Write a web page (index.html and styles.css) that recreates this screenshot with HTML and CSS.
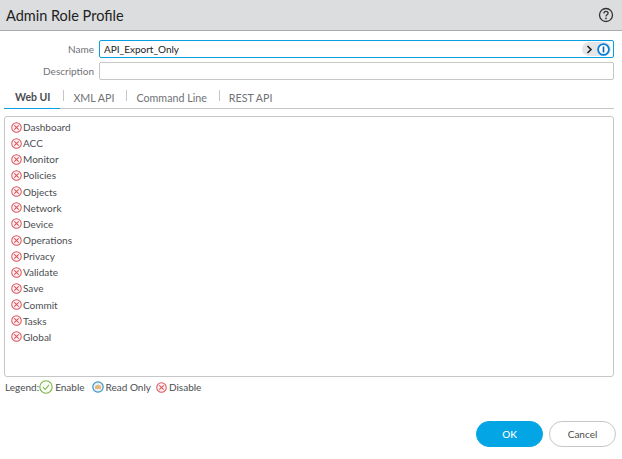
FILE: index.html
```html
<!DOCTYPE html>
<html lang="en">
<head>
  <meta charset="UTF-8" />
  <title>Admin Role Profile</title>
  <link rel="stylesheet" href="styles.css">
</head>
<body>
  <svg class="defs" width="0" height="0">
    <symbol id="disable" viewBox="0 0 12 12">
      <circle cx="6" cy="6" r="5.2" fill="#fdf1f1" stroke="#d9555f" stroke-width="1.1"/>
      <path d="M3.6 3.6l4.8 4.8M8.4 3.6l-4.8 4.8" fill="none" stroke="#d9555f" stroke-width="1.1"/>
    </symbol>
  </svg>

  <div class="dialog">
    <header class="title-bar">
      <h1>Admin Role Profile</h1>
      <svg class="help" width="16" height="16" viewBox="0 0 16 16">
        <circle cx="8" cy="8" r="6.5" fill="none" stroke="#333" stroke-width="1.3"/>
        <path d="M5.9 6.4c0-1.3 1-2 2.1-2s2.1.7 2.1 1.9c0 1.5-2.1 1.6-2.1 3.1" fill="none" stroke="#333" stroke-width="1.3"/>
        <circle cx="8" cy="11.3" r=".9" fill="#333"/>
      </svg>
    </header>

    <div class="fields">
      <div class="field">
        <label>Name</label>
        <div class="input active">
          <span>API_Export_Only</span>
          <div class="pill">
            <svg width="7" height="9" viewBox="0 0 7 9"><path d="M1.5 1l3.5 3.5L1.5 8" fill="none" stroke="#222" stroke-width="1.6"/></svg>
            <svg width="13" height="13" viewBox="0 0 13 13">
              <circle cx="6.5" cy="6.5" r="5.4" fill="#fff" stroke="#0a7fd9" stroke-width="1.8"/>
              <path d="M6.5 3.5v6" stroke="#0a5fa8" stroke-width="1.6"/>
            </svg>
          </div>
        </div>
      </div>
      <div class="field">
        <label>Description</label>
        <div class="input"></div>
      </div>
    </div>

    <nav class="tabs">
      <a class="tab current">Web UI</a>
      <a class="tab">XML API</a>
      <a class="tab">Command Line</a>
      <a class="tab">REST API</a>
    </nav>

    <ul class="perms">
      <li><svg><use href="#disable"/></svg>Dashboard</li>
      <li><svg><use href="#disable"/></svg>ACC</li>
      <li><svg><use href="#disable"/></svg>Monitor</li>
      <li><svg><use href="#disable"/></svg>Policies</li>
      <li><svg><use href="#disable"/></svg>Objects</li>
      <li><svg><use href="#disable"/></svg>Network</li>
      <li><svg><use href="#disable"/></svg>Device</li>
      <li><svg><use href="#disable"/></svg>Operations</li>
      <li><svg><use href="#disable"/></svg>Privacy</li>
      <li><svg><use href="#disable"/></svg>Validate</li>
      <li><svg><use href="#disable"/></svg>Save</li>
      <li><svg><use href="#disable"/></svg>Commit</li>
      <li><svg><use href="#disable"/></svg>Tasks</li>
      <li><svg><use href="#disable"/></svg>Global</li>
    </ul>

    <div class="legend">
      <span class="legend-label">Legend:</span>
      <span class="legend-item enable">
        <svg width="14" height="14" viewBox="0 0 14 14">
          <circle cx="7" cy="7" r="6.2" fill="#fbfdf8" stroke="#7cb445" stroke-width="1.1"/>
          <path d="M4 7.2l2.2 2.3L10 4.8" fill="none" stroke="#7cb445" stroke-width="1.1"/>
        </svg>Enable
      </span>
      <span class="legend-item readonly">
        <svg width="12" height="12" viewBox="0 0 12 12">
          <circle cx="6" cy="6" r="5.2" fill="#e8f2f8" stroke="#3c93c4" stroke-width="1.2"/>
          <path d="M3 8V6.4C3 4.8 4.4 3.8 6 3.8s3 1 3 2.6V8z" fill="#e8b676"/>
        </svg>Read Only
      </span>
      <span class="legend-item">
        <svg width="11" height="11"><use href="#disable"/></svg>Disable
      </span>
    </div>

    <footer class="actions">
      <button class="btn primary">OK</button>
      <button class="btn">Cancel</button>
    </footer>
  </div>
</body>
</html>
```

FILE: styles.css
```css
html, body {
  margin: 0;
  height: 100%;
}
body {
  background: #fff;
  font-family: 'Lato', sans-serif;
  font-size: 10px;
  color: #333;
  overflow: hidden;
}
.defs {
  position: absolute;
}
.dialog {
  display: flex;
  flex-direction: column;
  height: 459px;
}
.title-bar {
  height: 30px;
  background: #dcdddf;
  border-bottom: 1px solid #a9abae;
  display: flex;
  align-items: center;
  justify-content: space-between;
  padding: 0 8px 0 6px;
  flex-shrink: 0;
}
.title-bar h1 {
  margin: 0;
  font-size: 14.5px;
  font-weight: 400;
  color: #222;
}
.help {
  display: block;
}
.fields {
  padding: 9px 8px 0 0;
  display: flex;
  flex-direction: column;
  gap: 4px;
}
.field {
  display: flex;
  align-items: center;
  gap: 5px;
}
.field label {
  width: 94px;
  text-align: right;
  color: #6f7276;
}
.input {
  flex: 1;
  height: 16px;
  border: 1px solid #c4c6c8;
  border-radius: 2px;
  display: flex;
  align-items: center;
  justify-content: space-between;
  padding: 0 2px 0 4px;
  color: #222;
}
.input.active {
  border-color: #0a9fe0;
}
.pill {
  display: flex;
  align-items: center;
  gap: 4px;
  height: 14px;
  padding: 0 1px 0 4px;
  background: #e4e5e6;
  border-radius: 7px;
}
.pill svg {
  display: block;
}
.tabs {
  display: flex;
  align-items: center;
  margin: 8px 8px 0 4px;
  height: 20px;
  border-bottom: 1px solid #c4c6c8;
  font-size: 10.7px;
}
.tab {
  position: relative;
  height: 20px;
  line-height: 19px;
  padding: 0 12px 0 10px;
  color: #6f7276;
  box-sizing: border-box;
}
.tab + .tab::before {
  content: "";
  position: absolute;
  left: 0;
  top: 2px;
  height: 11px;
  border-left: 1px solid #c4c6c8;
}
.tab.current {
  font-weight: 700;
  font-size: 10.5px;
  color: #4a4d50;
  padding: 0 10px 0 11px;
  margin-right: 3px;
  border-bottom: 1px solid #0a9fe0;
  height: 21px;
  margin-bottom: -1px;
}
.perms {
  list-style: none;
  margin: 7px 8px 0 4px;
  padding: 2px 0 1px 6px;
  height: 256px;
  border: 1px solid #c4c6c8;
  border-radius: 3px;
}
.perms li {
  display: flex;
  align-items: center;
  gap: 1px;
  height: 16.15px;
  color: #4a4d50;
}
.perms svg {
  width: 11px;
  height: 11px;
  flex-shrink: 0;
}
.legend {
  display: flex;
  align-items: center;
  margin: 3px 0 0 5px;
  height: 14px;
  color: #4a4d50;
}
.legend-item {
  display: flex;
  align-items: center;
  gap: 2px;
  margin-right: 7px;
}
.legend-item.readonly {
  margin-right: 5px;
}
.actions {
  display: flex;
  justify-content: flex-end;
  gap: 6px;
  margin-top: 27px;
  padding-right: 6px;
}
.btn {
  width: 67px;
  height: 26px;
  border: 1px solid #c4c6c8;
  border-radius: 13px;
  background: #fff;
  color: #4a4d50;
  font-family: 'Lato', sans-serif;
  font-size: 10px;
  padding: 0;
}
.btn.primary {
  background: #04a5e5;
  border-color: #04a5e5;
  color: #fff;
  font-weight: 500;
}
```
